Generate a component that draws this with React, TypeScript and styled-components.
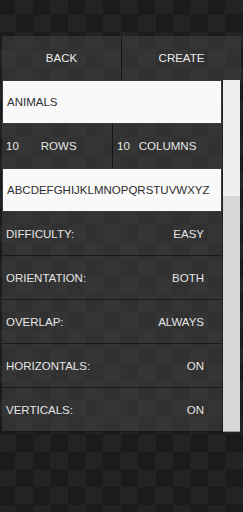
import React from "react"
import styled, { createGlobalStyle } from "styled-components"

const GlobalStyle = createGlobalStyle`
  html, body {
    margin: 0;
    padding: 0;
    background: #1b1b1b;
  }
  body {
    font-family: "Liberation Sans", Arial, sans-serif;
  }
`

const Screen = styled.div`
  width: 243px;
  min-height: 512px;
  box-sizing: border-box;
  padding: 36px 2px 0 2px;
  background-color: #1b1b1b;
  background-image: conic-gradient(
    #232323 0 25%,
    #1b1b1b 0 50%,
    #232323 0 75%,
    #1b1b1b 0
  );
  background-size: 35px 35px;
  background-position: -2px -3px;
`

const Toolbar = styled.div`
  display: flex;
  height: 44px;
`

const ToolButton = styled.div`
  flex: 1;
  display: flex;
  align-items: center;
  justify-content: center;
  color: #ececec;
  font-size: 11.5px;
  background: rgba(72, 72, 72, 0.5);
  & + & {
    border-left: 1px solid #151515;
  }
`

const Body = styled.div`
  display: flex;
`

const List = styled.div`
  flex: 1;
  min-width: 0;
  display: flex;
  flex-direction: column;
`

const Row = styled.div<{ $light?: boolean }>`
  height: 44px;
  box-sizing: border-box;
  display: flex;
  align-items: center;
  justify-content: space-between;
  white-space: nowrap;
  padding: 0 18px 0 4px;
  font-size: 11.5px;
  color: ${(p) => (p.$light ? "#2e2e2e" : "#e6e6e6")};
  background: ${(p) => (p.$light ? "#f9f9f9" : "rgba(72, 72, 72, 0.5)")};
  border: ${(p) => (p.$light ? "1px solid #3a3a3a" : "none")};
  border-bottom: 1px solid ${(p) => (p.$light ? "#3a3a3a" : "#1a1a1a")};
`

const SplitRow = styled.div`
  height: 44px;
  box-sizing: border-box;
  display: flex;
  font-size: 11.5px;
  color: #e6e6e6;
  background: rgba(72, 72, 72, 0.5);
`

const Half = styled.div<{ $gap: number }>`
  display: flex;
  align-items: center;
  gap: ${(p) => p.$gap}px;
  padding-left: 4px;
  flex: ${(p) => (p.$gap > 15 ? "0 0 106px" : "1")};
  & + & {
    border-left: 1px solid #151515;
  }
`

const ScrollTrack = styled.div`
  flex: 0 0 17px;
  margin: 0 1px;
  display: flex;
  flex-direction: column;
  background: #d8d8d8;
  border-bottom: 1px solid #9a9a9a;
`

const ScrollThumb = styled.div`
  height: 116px;
  background: #efefef;
`

const settings: [string, string][] = [
  ["DIFFICULTY:", "EASY"],
  ["ORIENTATION:", "BOTH"],
  ["OVERLAP:", "ALWAYS"],
  ["HORIZONTALS:", "ON"],
  ["VERTICALS:", "ON"],
]

export default function App() {
  return (
    <>
      <GlobalStyle />
      <Screen>
        <Toolbar>
          <ToolButton>BACK</ToolButton>
          <ToolButton>CREATE</ToolButton>
        </Toolbar>
        <Body>
          <List>
            <Row $light>ANIMALS</Row>
            <SplitRow>
              <Half $gap={22}>
                <span>10</span>
                <span>ROWS</span>
              </Half>
              <Half $gap={9}>
                <span>10</span>
                <span>COLUMNS</span>
              </Half>
            </SplitRow>
            <Row $light>ABCDEFGHIJKLMNOPQRSTUVWXYZ</Row>
            {settings.map(([label, value]) => (
              <Row key={label}>
                <span>{label}</span>
                <span>{value}</span>
              </Row>
            ))}
          </List>
          <ScrollTrack>
            <ScrollThumb />
          </ScrollTrack>
        </Body>
      </Screen>
    </>
  )
}
